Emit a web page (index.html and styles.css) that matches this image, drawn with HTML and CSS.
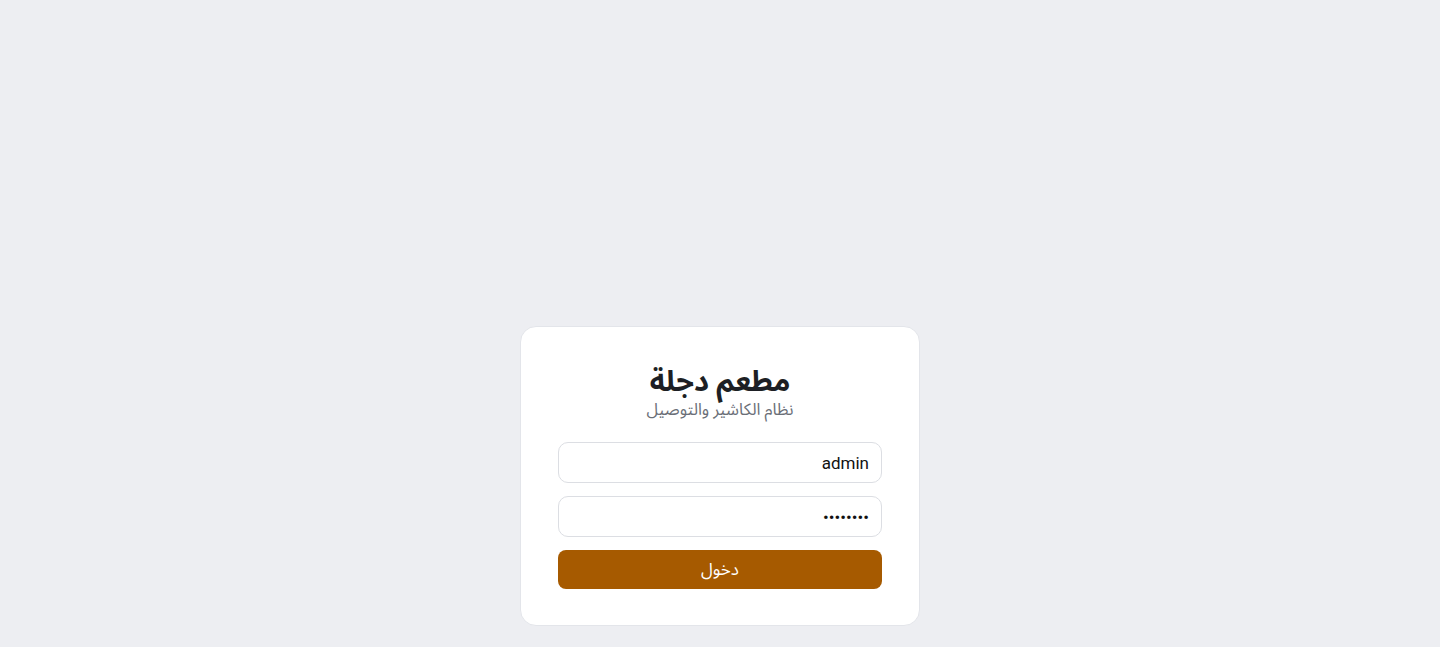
FILE: index.html
```html
<!DOCTYPE html>
<html lang="ar" dir="rtl">
<head>
<meta charset="utf-8">
<title>مطعم دجلة</title>
<link rel="stylesheet" href="styles.css">
</head>
<body>
<main class="page">
  <form class="card">
    <h1 class="title">مطعم دجلة</h1>
    <p class="subtitle">نظام الكاشير والتوصيل</p>
    <input class="field" type="text" value="admin">
    <input class="field" type="password" value="12345678">
    <button class="btn" type="button">دخول</button>
  </form>
</main>
</body>
</html>
```
FILE: styles.css
```css
html, body {
  margin: 0;
  padding: 0;
  background: #edeef2;
  font-family: Roboto, "Noto Sans Arabic", "Noto Sans", "DejaVu Sans", sans-serif;
}
.page {
  display: flex;
  justify-content: center;
  padding-top: 326px;
  min-height: 100vh;
  box-sizing: border-box;
}
.card {
  width: 400px;
  box-sizing: border-box;
  background: #ffffff;
  border: 1px solid #e3e5ea;
  border-radius: 16px;
  padding: 34px 37px 36px;
  display: flex;
  flex-direction: column;
  height: 300px;
}
.title {
  margin: 0;
  text-align: center;
  font-size: 29px;
  font-weight: 700;
  line-height: 40px;
  color: #1d1f24;
}
.subtitle {
  margin: -2px 0 21px;
  text-align: center;
  font-size: 16.5px;
  line-height: 22px;
  color: #6b6f78;
}
.field {
  height: 41px;
  box-sizing: border-box;
  border: 1px solid #dcdee3;
  border-radius: 10px;
  padding: 0 12px;
  font-family: inherit;
  font-size: 17px;
  color: #111;
  background: #fff;
  margin-bottom: 13px;
  text-align: right;
  outline: none;
}
.btn {
  height: 39px;
  border: none;
  border-radius: 8px;
  background: #a65a00;
  color: #fff;
  font-family: inherit;
  font-size: 17px;
  font-weight: 400;
}
```
